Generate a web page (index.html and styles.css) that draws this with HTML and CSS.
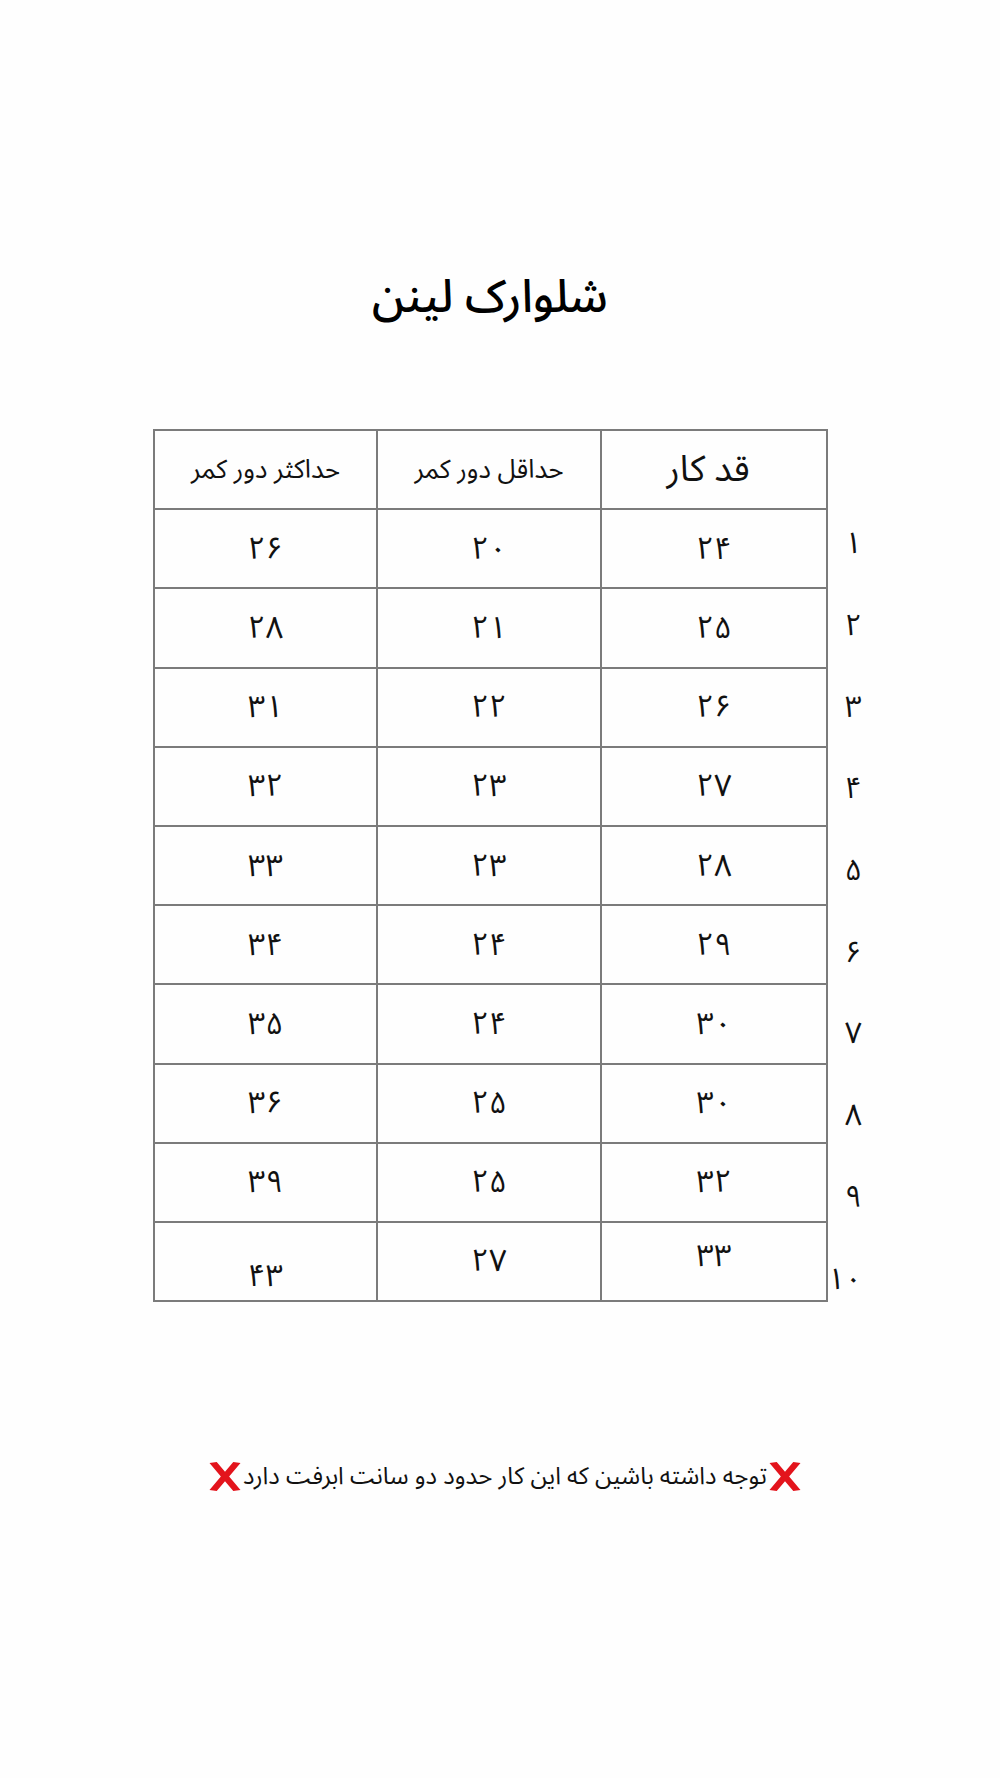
FILE: index.html
```html
<!DOCTYPE html>
<html lang="fa">
<head>
<meta charset="utf-8">
<title>شلوارک لینن</title>
<link rel="stylesheet" href="styles.css">
</head>
<body>
<div class="page">
  <h1 class="title">شلوارک لینن</h1>

  <div class="table-wrap">
    <div class="size-table">
      <div class="cell head head-big">قد کار</div>
      <div class="cell head">حداقل دور کمر</div>
      <div class="cell head">حداکثر دور کمر</div>

      <div class="cell">۲۴</div><div class="cell">۲۰</div><div class="cell">۲۶</div>
      <div class="cell">۲۵</div><div class="cell">۲۱</div><div class="cell">۲۸</div>
      <div class="cell">۲۶</div><div class="cell">۲۲</div><div class="cell">۳۱</div>
      <div class="cell">۲۷</div><div class="cell">۲۳</div><div class="cell">۳۲</div>
      <div class="cell">۲۸</div><div class="cell">۲۳</div><div class="cell">۳۳</div>
      <div class="cell">۲۹</div><div class="cell">۲۴</div><div class="cell">۳۴</div>
      <div class="cell">۳۰</div><div class="cell">۲۴</div><div class="cell">۳۵</div>
      <div class="cell">۳۰</div><div class="cell">۲۵</div><div class="cell">۳۶</div>
      <div class="cell">۳۲</div><div class="cell">۲۵</div><div class="cell">۳۹</div>
      <div class="cell up">۳۳</div><div class="cell">۲۷</div><div class="cell down">۴۳</div>
    </div>

    <div class="row-nums">
      <div class="num">۱</div>
      <div class="num">۲</div>
      <div class="num">۳</div>
      <div class="num">۴</div>
      <div class="num">۵</div>
      <div class="num">۶</div>
      <div class="num">۷</div>
      <div class="num">۸</div>
      <div class="num">۹</div>
      <div class="num">۱۰</div>
    </div>
  </div>

  <p class="note">
    <svg class="cross" viewBox="0 0 34 30" aria-hidden="true"><path d="M2 2 L9 1 L17 10.5 L25 1 L32 2 L21 15 L32 28 L25 29 L17 19.5 L9 29 L2 28 L13 15 Z"/></svg>
    <span class="note-text">توجه داشته باشین که این کار حدود دو سانت ابرفت دارد</span>
    <svg class="cross" viewBox="0 0 34 30" aria-hidden="true"><path d="M2 2 L9 1 L17 10.5 L25 1 L32 2 L21 15 L32 28 L25 29 L17 19.5 L9 29 L2 28 L13 15 Z"/></svg>
  </p>
</div>
</body>
</html>
```

FILE: styles.css
```css
html, body {
  margin: 0;
  padding: 0;
  background: #fefefe;
}

body {
  font-family: "Noto Sans Arabic", "DejaVu Sans", "Liberation Sans", sans-serif;
  color: #111;
}

.page {
  width: 1000px;
  min-height: 1778px;
  display: flex;
  flex-direction: column;
  align-items: center;
  padding-top: 266px;
  box-sizing: border-box;
}

.title {
  margin: 0;
  margin-right: 20px;
  font-size: 46px;
  font-weight: 500;
  line-height: 64px;
  height: 64px;
  direction: rtl;
  color: #000;
}

.table-wrap {
  align-self: flex-start;
  margin-left: 153px;
  margin-top: 99px;
  display: flex;
  align-items: flex-start;
}

.size-table {
  direction: rtl;
  display: grid;
  grid-template-columns: 224px 222px 221px;
  grid-auto-rows: 77.2px;
  gap: 2px;
  padding: 2px;
  background: #7b7b7b;
}

.cell {
  background: #fefefe;
  display: flex;
  align-items: center;
  justify-content: center;
  font-size: 31px;
  color: #111;
}

.cell.head {
  font-size: 26px;
}

.cell.head-big {
  font-size: 36px;
  padding-right: 12px;
  box-sizing: border-box;
}

.cell.up {
  padding-bottom: 10px;
  box-sizing: border-box;
}

.cell.down {
  padding-top: 30px;
  box-sizing: border-box;
}

.row-nums {
  direction: rtl;
  margin-top: 74px;
  width: 34px;
  display: flex;
  flex-direction: column;
}

.num {
  height: 81.7px;
  display: flex;
  align-items: center;
  justify-content: flex-start;
  font-size: 30px;
  color: #111;
}

.note {
  direction: rtl;
  margin: 137px 0 0 10px;
  display: flex;
  align-items: center;
  height: 40px;
  font-size: 24px;
  color: #111;
}

.cross {
  width: 36px;
  height: 31px;
  fill: #e3141c;
  flex: none;
}
```
